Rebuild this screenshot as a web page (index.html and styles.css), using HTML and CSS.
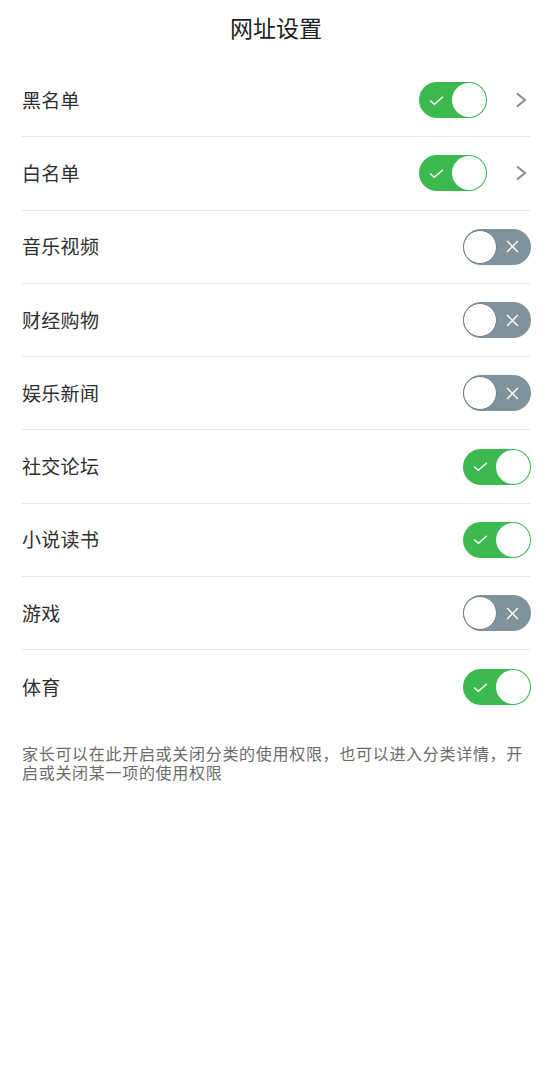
FILE: index.html
```html
<!DOCTYPE html>
<html lang="zh-CN">
<head>
<meta charset="utf-8">
<link rel="stylesheet" href="styles.css">
</head>
<body>
<header class="header">网址设置</header>
<ul class="list">
  <li class="row"><span class="label">黑名单</span><span class="ctrl"><span class="toggle on"><svg class="mark" viewBox="0 0 14 10"><path d="M1 5 L5 8.5 L13 1.5"/></svg><span class="knob"></span></span><svg class="chev" viewBox="0 0 12 16"><path d="M2 1.5 L10 8 L2 14.5"/></svg></span></li>
  <li class="row"><span class="label">白名单</span><span class="ctrl"><span class="toggle on"><svg class="mark" viewBox="0 0 14 10"><path d="M1 5 L5 8.5 L13 1.5"/></svg><span class="knob"></span></span><svg class="chev" viewBox="0 0 12 16"><path d="M2 1.5 L10 8 L2 14.5"/></svg></span></li>
  <li class="row"><span class="label">音乐视频</span><span class="toggle off"><span class="knob"></span><svg class="xmark" viewBox="0 0 12 12"><path d="M1 1 L11 11 M11 1 L1 11"/></svg></span></li>
  <li class="row"><span class="label">财经购物</span><span class="toggle off"><span class="knob"></span><svg class="xmark" viewBox="0 0 12 12"><path d="M1 1 L11 11 M11 1 L1 11"/></svg></span></li>
  <li class="row"><span class="label">娱乐新闻</span><span class="toggle off"><span class="knob"></span><svg class="xmark" viewBox="0 0 12 12"><path d="M1 1 L11 11 M11 1 L1 11"/></svg></span></li>
  <li class="row"><span class="label">社交论坛</span><span class="toggle on"><svg class="mark" viewBox="0 0 14 10"><path d="M1 5 L5 8.5 L13 1.5"/></svg><span class="knob"></span></span></li>
  <li class="row"><span class="label">小说读书</span><span class="toggle on"><svg class="mark" viewBox="0 0 14 10"><path d="M1 5 L5 8.5 L13 1.5"/></svg><span class="knob"></span></span></li>
  <li class="row"><span class="label">游戏</span><span class="toggle off"><span class="knob"></span><svg class="xmark" viewBox="0 0 12 12"><path d="M1 1 L11 11 M11 1 L1 11"/></svg></span></li>
  <li class="row last"><span class="label">体育</span><span class="toggle on"><svg class="mark" viewBox="0 0 14 10"><path d="M1 5 L5 8.5 L13 1.5"/></svg><span class="knob"></span></span></li>
</ul>
<p class="note">家长可以在此开启或关闭分类的使用权限，也可以进入分类详情，开启或关闭某一项的使用权限</p>
</body>
</html>
```
FILE: styles.css
```css
* { box-sizing: border-box; }
html, body { margin: 0; padding: 0; background: #fff; }
body {
  font-family: "Noto Sans CJK SC", "Noto Sans", sans-serif;
  color: #333;
  width: 552px;
}
.header {
  height: 64px;
  padding-top: 11px;
  text-align: center;
  font-size: 23px;
  line-height: 32px;
  color: #1e1e1e;
}
.list {
  list-style: none;
  margin: 0 22px;
  padding: 0;
}
.row {
  height: 73.3px;
  display: flex;
  align-items: center;
  justify-content: space-between;
  border-bottom: 1px solid #e6e6e6;
}
.row.last { border-bottom: none; }
.label {
  font-size: 19px;
  color: #2e2e2e;
  letter-spacing: 0.3px;
  margin-top: -2px;
}
.ctrl {
  display: flex;
  align-items: center;
  gap: 29px;
  margin-right: 3px;
}
.toggle {
  width: 68px;
  height: 36px;
  border-radius: 18px;
  display: flex;
  align-items: center;
  padding: 1px;
  margin-right: -1px;
}
.toggle.on {
  background: #3dba4f;
  justify-content: space-between;
  padding-left: 10px;
}
.toggle.off {
  background: #80939d;
  justify-content: space-between;
  padding-right: 12px;
}
.knob {
  width: 34px;
  height: 34px;
  border-radius: 50%;
  background: #fff;
}
.toggle.off .knob {
  border: 1.5px solid #6f7c84;
  margin-left: -1px;
}
.mark {
  width: 15px;
  height: 11px;
  fill: none;
  stroke: #fff;
  stroke-width: 1.3;
}
.xmark {
  width: 13px;
  height: 13px;
  fill: none;
  stroke: #fff;
  stroke-width: 1.3;
}
.chev {
  width: 12px;
  height: 16px;
  fill: none;
  stroke: #8a8a8a;
  stroke-width: 2;
}
.note {
  margin: 20px 22px 0;
  font-size: 16px;
  line-height: 19px;
  letter-spacing: 0.7px;
  color: #6b6b6b;
}
```
